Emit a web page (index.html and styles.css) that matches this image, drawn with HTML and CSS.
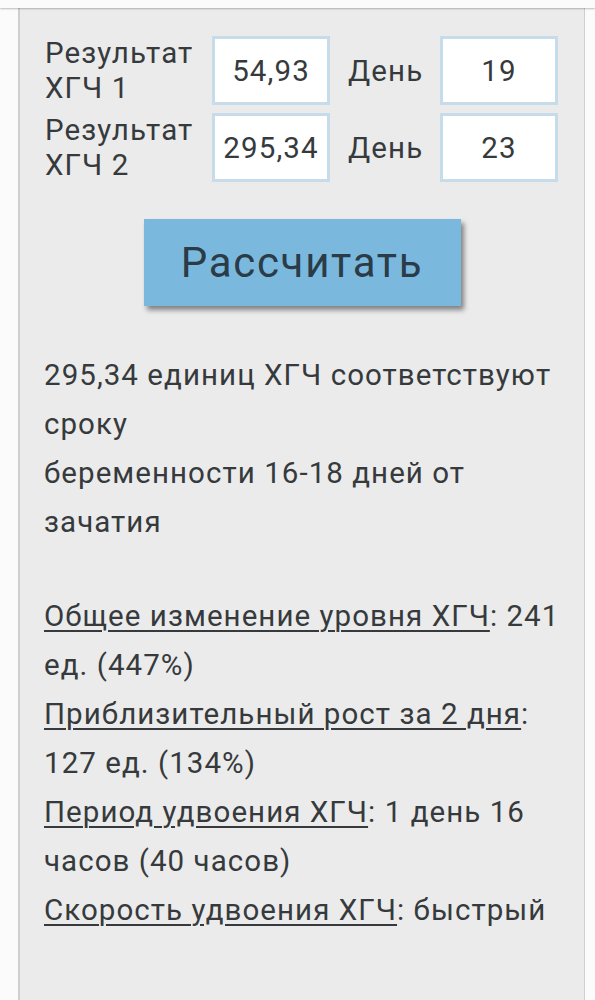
FILE: index.html
```html
<!DOCTYPE html>
<html lang="ru">
<head>
<meta charset="utf-8">
<link rel="stylesheet" href="styles.css">
</head>
<body>
<div class="topbar"></div>
<div class="panel">
  <div class="form">
    <div class="label">Результат<br>ХГЧ 1</div>
    <div class="field">54,93</div>
    <div class="day">День</div>
    <div class="field">19</div>
    <div class="label">Результат<br>ХГЧ 2</div>
    <div class="field">295,34</div>
    <div class="day">День</div>
    <div class="field">23</div>
  </div>
  <div class="btnwrap"><div class="btn">Рассчитать</div></div>
  <p class="result">295,34 единиц ХГЧ соответствуют<br>сроку<br>беременности 16-18 дней от<br>зачатия</p>
  <p class="stats"><u>Общее изменение уровня ХГЧ</u>: 241 ед. (447%)<br><u>Приблизительный рост за 2 дня</u>: 127 ед. (134%)<br><u>Период удвоения ХГЧ</u>: 1 день 16 часов (40 часов)<br><u>Скорость удвоения ХГЧ</u>: быстрый</p>
</div>
</body>
</html>
```
FILE: styles.css
```css
html, body {
  margin: 0;
  padding: 0;
  background: #fbfbfb;
  font-family: Roboto, "Noto Sans", sans-serif;
  color: #363a3c;
  height: 1000px;
  overflow: hidden;
}
.topbar {
  position: relative;
  z-index: 2;
  height: 8px;
  background: #fbfbfb;
  box-shadow: 0 1px 2px rgba(0,0,0,0.25);
}
.panel {
  margin-left: 18px;
  width: 564px;
  height: 992px;
  background: #ebebeb;
  border-left: 2px solid #cfcfcf;
  border-right: 1px solid #cfcfcf;
  box-sizing: content-box;
}
.form {
  display: grid;
  grid-template-columns: 167px 118px 110px 118px;
  grid-auto-rows: 69px;
  row-gap: 8px;
  padding: 28px 0 0 25px;
  font-size: 29.5px;
  letter-spacing: 1.1px;
}
.label {
  line-height: 35px;
  align-self: start;
  margin-top: 0;
  white-space: nowrap;
}
.field {
  background: #fff;
  border: 3px solid #c6dcea;
  display: flex;
  align-items: center;
  justify-content: center;
  box-sizing: border-box;
  white-space: nowrap;
  overflow: hidden;
}
.day {
  display: flex;
  align-items: center;
  padding-left: 18px;
}
.btnwrap {
  display: flex;
  justify-content: center;
  padding-top: 37px;
}
.btn {
  width: 317px;
  height: 87px;
  background: #7ab9dd;
  color: #2b3b47;
  font-size: 42px;
  letter-spacing: 1.7px;
  display: flex;
  align-items: center;
  justify-content: center;
  box-shadow: 3px 4px 5px rgba(0,0,0,0.45);
}
.result, .stats {
  margin: 0;
  padding: 0 14px 0 24px;
  font-size: 29.5px;
  letter-spacing: 1.05px;
  line-height: 49px;
}
.result {
  margin-top: 45px;
}
.stats {
  margin-top: 45px;
}
u {
  text-decoration-thickness: 2px;
  text-underline-offset: 4px;
}
```
